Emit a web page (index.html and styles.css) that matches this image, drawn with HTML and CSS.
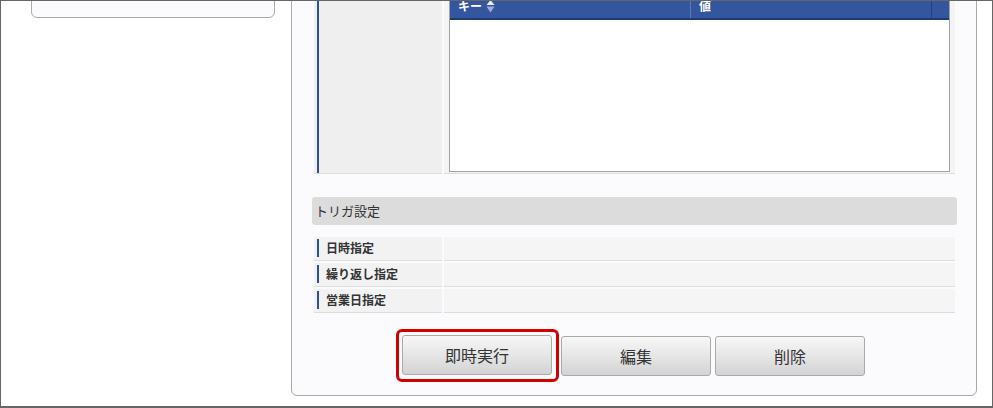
FILE: index.html
```html
<!DOCTYPE html>
<html lang="ja">
<head>
<meta charset="utf-8">
<title>ジョブスケジューラ</title>
<link rel="stylesheet" href="styles.css">
</head>
<body>
<div class="frame">
  <div class="layout">
    <aside class="sidebar">
      <div class="side-card"></div>
    </aside>
    <main class="panel">
      <div class="detail detail-tall">
        <div class="label-cell"><div class="bar"></div></div>
        <div class="value-cell value-cell-tall">
          <div class="grid-table">
            <div class="grid-head">
              <div class="gh gh-key">キー<svg class="sort-icon" width="9" height="14" viewBox="0 0 9 14"><path d="M4.5 0 L8.5 5 L0.5 5 Z" fill="#e6eaf5"/><path d="M0.5 6.5 L8.5 6.5 L4.5 12.5 Z" fill="#9eaed6"/></svg></div>
              <div class="gh gh-val">値</div>
              <div class="gh gh-scroll"></div>
            </div>
            <div class="grid-body"></div>
          </div>
        </div>
      </div>

      <div class="section-head">トリガ設定</div>

      <div class="detail detail-rows">
        <div class="label-cell row-label"><div class="bar">日時指定</div></div>
        <div class="value-cell row-value"></div>
        <div class="label-cell row-label"><div class="bar">繰り返し指定</div></div>
        <div class="value-cell row-value"></div>
        <div class="label-cell row-label"><div class="bar">営業日指定</div></div>
        <div class="value-cell row-value"></div>
      </div>

      <div class="actions">
        <div class="highlight"><button class="btn" type="button">即時実行</button></div>
        <button class="btn" type="button">編集</button>
        <button class="btn" type="button">削除</button>
      </div>
    </main>
  </div>
</div>
</body>
</html>
```

FILE: styles.css
```css
html, body {
  margin: 0;
  padding: 0;
  background: #ffffff;
}

body {
  font-family: "Noto Sans CJK JP", "Noto Sans", "Liberation Sans", sans-serif;
  color: #333333;
}

.frame {
  width: 993px;
  height: 408px;
  box-sizing: border-box;
  border: 1px solid #666666;
  border-bottom-width: 2px;
  background: #ffffff;
  overflow: hidden;
}

.layout {
  display: flex;
  align-items: flex-start;
  margin-top: -30px;
}

.sidebar {
  width: 290px;
  flex: none;
  padding-left: 30px;
  box-sizing: border-box;
}

.side-card {
  width: 244px;
  height: 47px;
  box-sizing: border-box;
  border: 1px solid #aaaaaa;
  border-radius: 0 0 6px 6px;
  background: #fbfbfd;
}

.panel {
  width: 686px;
  flex: none;
  box-sizing: border-box;
  border: 1px solid #aaaaaa;
  border-radius: 6px;
  background: #fbfbfd;
  padding: 14px 19px 13px 20px;
}

.detail {
  display: grid;
  grid-template-columns: 128px 511px;
  column-gap: 2px;
  row-gap: 2px;
  padding: 2px;
}

.label-cell {
  display: flex;
  background: #efefef;
  border-bottom: 1px solid #dddddd;
  padding: 0 3px;
}

.bar {
  flex: 1;
  border-left: 2px solid #2f4f98;
}

.value-cell {
  background: #f4f4f4;
  border-bottom: 1px solid #dddddd;
}

.value-cell-tall {
  padding: 5px 5px 1px 5px;
}

.grid-table {
  border: 1px solid #a3a3a3;
  background: #ffffff;
}

.grid-head {
  display: flex;
  height: 24px;
  background: #34569e;
  border-bottom: 2px solid #1f3b73;
}

.gh {
  box-sizing: border-box;
  color: #ffffff;
  font-size: 12px;
  font-weight: bold;
  line-height: 24px;
  padding-left: 8px;
  display: flex;
  align-items: center;
}

.gh-key {
  width: 241px;
  border-right: 1px solid #5b78b7;
}

.gh-val {
  width: 241px;
  border-right: 1px solid #23407a;
}

.gh-scroll {
  flex: 1;
  padding: 0;
}

.sort-icon {
  margin-left: 4px;
  margin-top: 2px;
}

.grid-body {
  height: 151px;
}

.section-head {
  margin-top: 21px;
  margin-bottom: 10px;
  height: 28px;
  line-height: 28px;
  background: #dcdcdc;
  border-radius: 3px;
  padding-left: 3px;
  font-size: 13px;
  color: #333333;
}

.row-label {
  background: #f2f2f2;
  padding: 2px 3px 3px 3px;
}

.row-label .bar {
  padding-left: 7px;
  line-height: 18px;
  font-size: 12px;
  font-weight: bold;
  color: #333333;
  white-space: nowrap;
}

.row-value {
  background: #f5f5f5;
  height: 23px;
}

.actions {
  display: flex;
  justify-content: center;
  align-items: center;
  margin-top: 14px;
  padding-right: 6px;
}

.highlight {
  border: 3px solid #d40000;
  border-radius: 6px;
  padding: 3px 2px 4px 1px;
  display: flex;
}

.btn {
  width: 150px;
  height: 40px;
  margin: 0 2px;
  box-sizing: border-box;
  border: 1px solid #aaaaaa;
  border-radius: 3px;
  background: linear-gradient(to bottom, #f7f7f7 0%, #e6e6e6 50%, #d3d3d3 100%);
  font-family: "Noto Sans CJK JP", "Noto Sans", "Liberation Sans", sans-serif;
  font-size: 16px;
  color: #333333;
  padding: 0;
  cursor: pointer;
}
```
